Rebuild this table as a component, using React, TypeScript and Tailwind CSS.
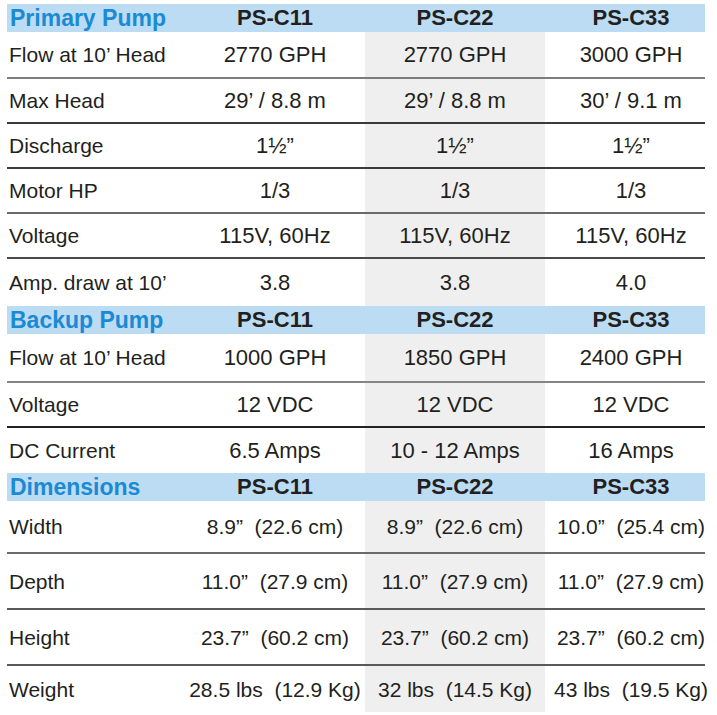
import React from "react";

type Row = { label: string; v: [string, string, string]; h: string; line?: string; vs?: string };

const GRID = "grid grid-cols-[178px_180px_180px_160px]";

function Header({ title }: { title: string }) {
  return (
    <div className={`${GRID} h-[28px] items-center bg-[#bcdcf4] text-[22px] font-bold leading-none`}>
      <div className="pl-[3px] text-[23px] text-[#1b8ad3]">{title}</div>
      <div className="text-center text-[#231f20]">PS-C11</div>
      <div className="text-center text-[#231f20]">PS-C22</div>
      <div className="pl-3 text-center text-[#231f20]">PS-C33</div>
    </div>
  );
}

function DataRow({ r }: { r: Row }) {
  const vs = r.vs ?? "text-[22px]";
  return (
    <div className={`${GRID} ${r.h} ${r.line ?? ""} text-[21px] leading-none text-[#231f20]`}>
      <div className="flex items-center pl-[2px]">{r.label}</div>
      <div className={`flex items-center justify-center whitespace-pre ${vs}`}>{r.v[0]}</div>
      <div className={`flex items-center justify-center whitespace-pre bg-[#efefef] ${vs}`}>{r.v[1]}</div>
      <div className={`flex items-center justify-center whitespace-pre pl-3 ${vs}`}>{r.v[2]}</div>
    </div>
  );
}

const primary: Row[] = [
  { label: "Flow at 10’ Head", v: ["2770 GPH", "2770 GPH", "3000 GPH"], h: "h-[47px]", line: "border-b-2 border-[#7d7d7d]" },
  { label: "Max Head", v: ["29’ / 8.8 m", "29’ / 8.8 m", "30’ / 9.1 m"], h: "h-[45px]", line: "border-b-2 border-[#3a3a3a]" },
  { label: "Discharge", v: ["1½”", "1½”", "1½”"], h: "h-[45px]", line: "border-b-2 border-[#3a3a3a]" },
  { label: "Motor HP", v: ["1/3", "1/3", "1/3"], h: "h-[45px]", line: "border-b-2 border-[#6a6a6a]" },
  { label: "Voltage", v: ["115V, 60Hz", "115V, 60Hz", "115V, 60Hz"], h: "h-[45px]", line: "border-b-2 border-[#4a4a4a]" },
  { label: "Amp. draw at 10’", v: ["3.8", "3.8", "4.0"], h: "h-[47px]" },
];

const backup: Row[] = [
  { label: "Flow at 10’ Head", v: ["1000 GPH", "1850 GPH", "2400 GPH"], h: "h-[49px]", line: "border-b-2 border-[#858585]" },
  { label: "Voltage", v: ["12 VDC", "12 VDC", "12 VDC"], h: "h-[45px]", line: "border-b-2 border-[#222]" },
  { label: "DC Current", v: ["6.5 Amps", "10 - 12 Amps", "16 Amps"], h: "h-[45px]" },
];

const D = "text-[21px]";
const dims: Row[] = [
  { label: "Width", v: ["8.9”  (22.6 cm)", "8.9”  (22.6 cm)", "10.0”  (25.4 cm)"], h: "h-[53px]", line: "border-b-2 border-[#6a6a6a]", vs: D },
  { label: "Depth", v: ["11.0”  (27.9 cm)", "11.0”  (27.9 cm)", "11.0”  (27.9 cm)"], h: "h-[56px]", line: "border-b-2 border-[#5a5a5a]", vs: D },
  { label: "Height", v: ["23.7”  (60.2 cm)", "23.7”  (60.2 cm)", "23.7”  (60.2 cm)"], h: "h-[56px]", line: "border-b-2 border-[#5a5a5a]", vs: D },
  { label: "Weight", v: ["28.5 lbs  (12.9 Kg)", "32 lbs  (14.5 Kg)", "43 lbs  (19.5 Kg)"], h: "h-[46px]", vs: D },
];

export default function App() {
  return (
    <div
      className="min-h-[715px] w-[717px] bg-white pl-[7px] pt-[4px]"
      style={{ fontFamily: '"Liberation Sans", Arial, sans-serif' }}
    >
      <div className="w-[698px]">
        <Header title="Primary Pump" />
        {primary.map((r, i) => (
          <DataRow key={"p" + i} r={r} />
        ))}
        <Header title="Backup Pump" />
        {backup.map((r, i) => (
          <DataRow key={"b" + i} r={r} />
        ))}
        <Header title="Dimensions" />
        {dims.map((r, i) => (
          <DataRow key={"d" + i} r={r} />
        ))}
      </div>
    </div>
  );
}
